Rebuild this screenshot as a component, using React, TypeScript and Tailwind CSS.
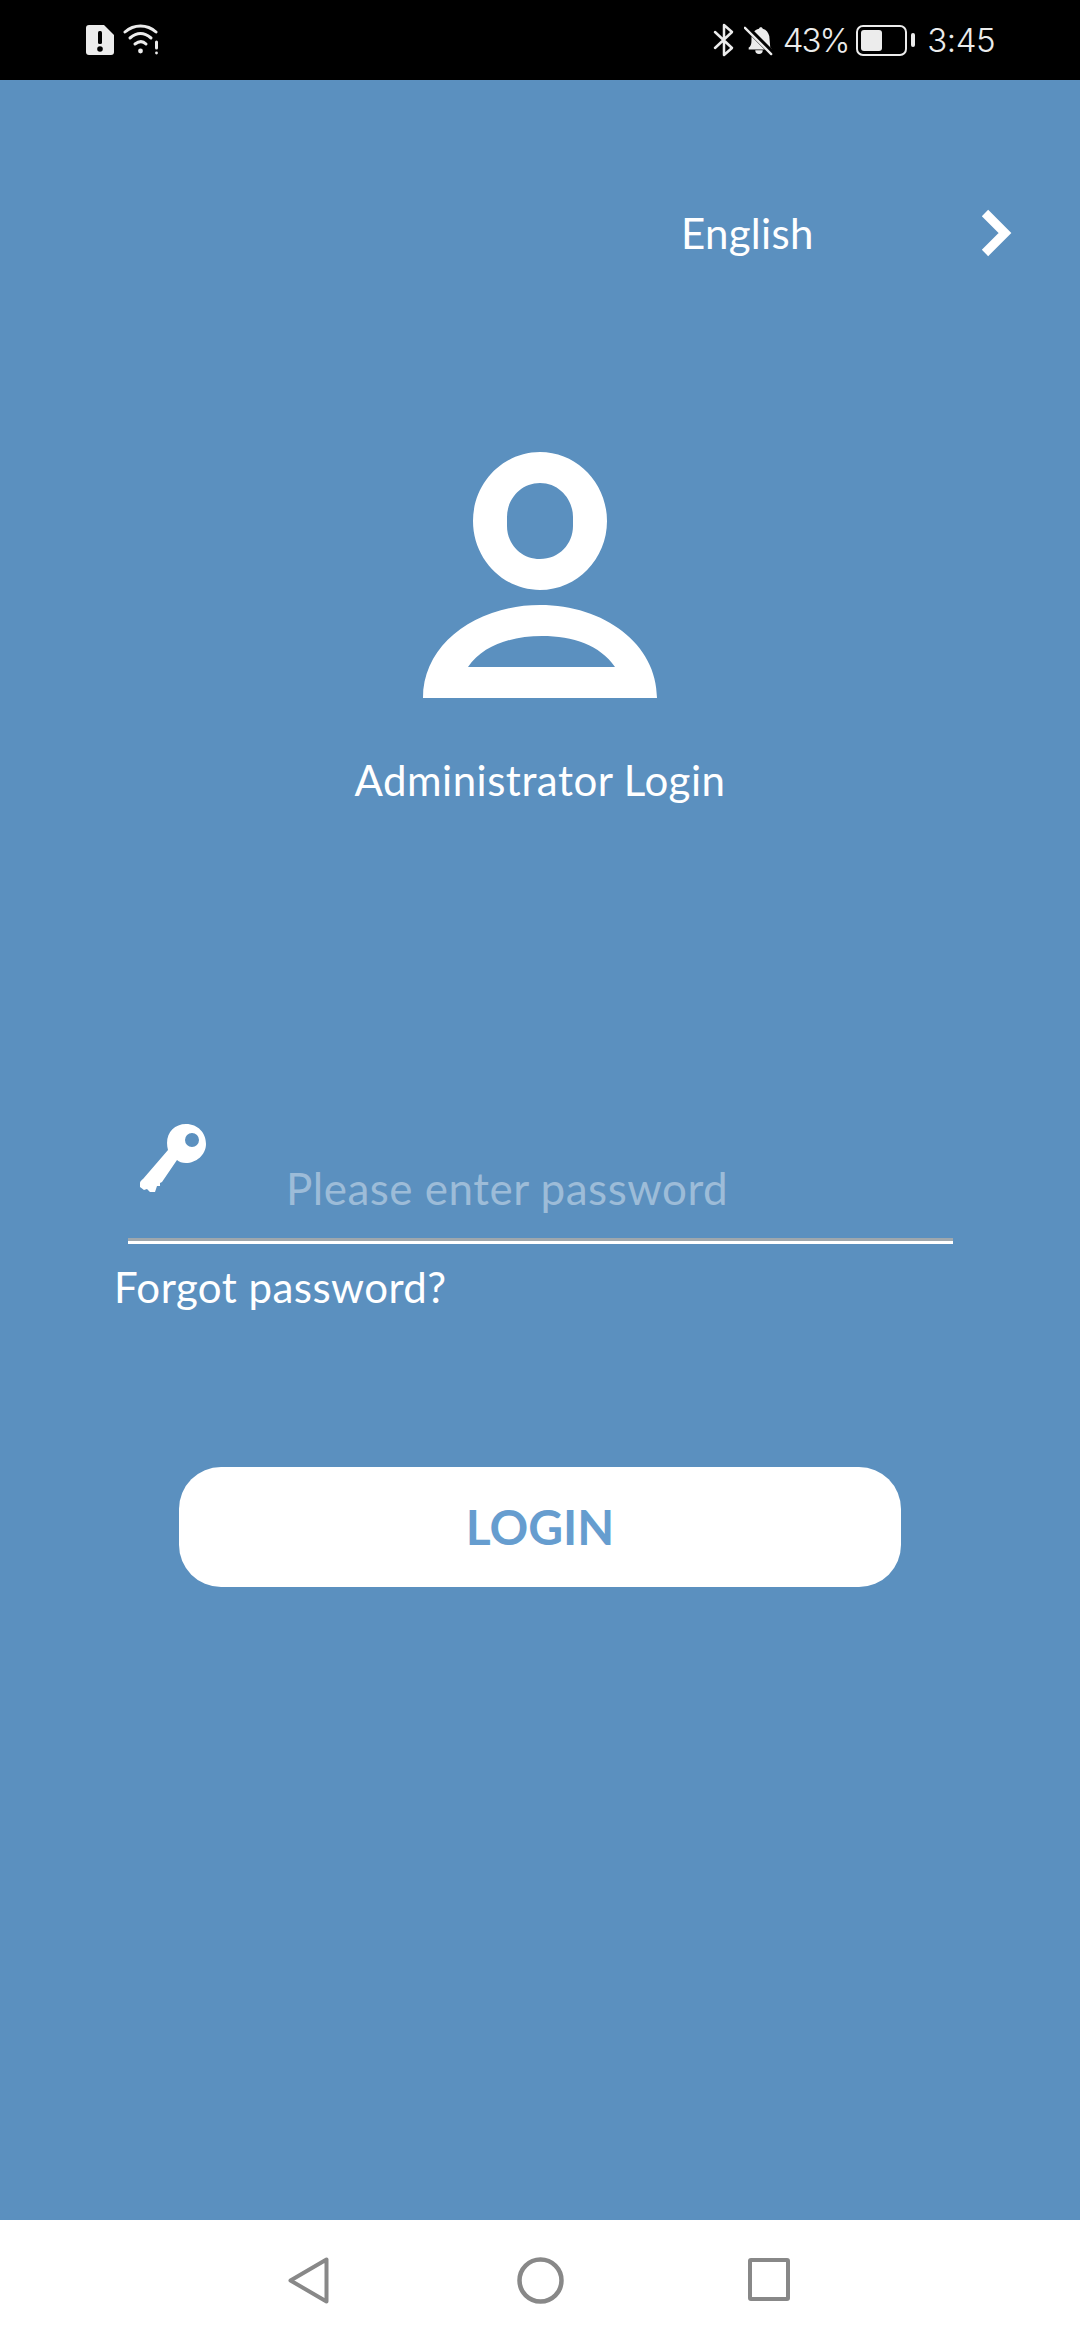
function StatusBar() {
  return (
    <div className="h-[80px] bg-black flex items-center text-[#ececec] pl-[85px] pr-[85px] shrink-0">
      <svg width="30" height="32" viewBox="0 0 30 32" className="mb-[1px]">
        <path d="M4 1h15l10 10v17a3 3 0 0 1-3 3H4a3 3 0 0 1-3-3V4a3 3 0 0 1 3-3z" fill="#ececec" />
        <rect x="13" y="7" width="4" height="13" rx="1.5" fill="#000" />
        <circle cx="15" cy="25" r="2.8" fill="#000" />
      </svg>
      <svg width="38" height="32" viewBox="0 0 38 32" className="ml-[8px]" fill="none" stroke="#ececec" strokeWidth="3" strokeLinecap="round">
        <path d="M2 8C11 0 24 0 33 8" />
        <path d="M7 14C14 8 21 8 28 14" />
        <path d="M12 20C16 17 20 17 23 20" />
        <circle cx="17.5" cy="27" r="2.4" fill="#ececec" stroke="none" />
        <path d="M33.500 18v6" />
        <circle cx="33.500" cy="29" r="1.400" fill="#ececec" stroke="none" />
      </svg>
      <div className="ml-auto flex items-center">
        <svg width="22" height="34" viewBox="0 0 22 34" fill="none" stroke="#ececec" strokeWidth="2.500" strokeLinejoin="round" strokeLinecap="round">
          <path d="M2 9l17 16-8 7V2l8 7L2 25" />
        </svg>
        <svg width="30" height="32" viewBox="0 0 32 32" className="ml-[9px]">
          <path d="M5 24c3-2 3-5 3-10 0-5 3-9 8-10 1-2 3-2 4 0 4 1 6 4 7 8l1 12 2 2H5z" fill="#ececec" />
          <path d="M12 27a4 4 0 0 0 8 0z" fill="#ececec" />
          <path d="M1 1l30 30" stroke="#000" strokeWidth="6" />
          <path d="M1 3l28 28" stroke="#ececec" strokeWidth="2.500" strokeLinecap="round" />
        </svg>
        <span className="ml-[9px] text-[33px] tracking-[-2px] leading-none font-['Inter',sans-serif] font-light">43%</span>
        <div className="ml-[8px] flex items-center">
          <div className="w-[51px] h-[31px] border-2 border-[#ececec] rounded-[7px] p-[3px]">
            <div className="w-[21px] h-full bg-[#ececec] rounded-[3px]" />
          </div>
          <div className="ml-[4px] w-[4px] h-[14px] bg-[#ececec] rounded-full" />
        </div>
        <span className="ml-[12px] text-[33px] tracking-[-0.5px] leading-none font-['Inter',sans-serif] font-light">3:45</span>
      </div>
    </div>
  );
}

function Avatar() {
  return (
    <svg width="234" height="246" viewBox="0 0 234 246">
      <path
        fill="#fff"
        fillRule="evenodd"
        d="M117 0c37 0 67 31 67 69s-30 69-67 69-67-31-67-69S80 0 117 0zm0 31c-19 0-33 16-33 34v9c0 18 14 33 33 33s33-15 33-33v-9c0-18-14-34-33-34z"
      />
      <path
        fill="#fff"
        fillRule="evenodd"
        d="M0 246c0-54 53-93 117-93s117 39 117 93zM45 215h147c-15-22-42-31-73-31-30 0-59 9-74 31z"
      />
    </svg>
  );
}

function KeyIcon() {
  return (
    <svg width="66" height="70" viewBox="0 0 66 70">
      <path
        fill="#fff"
        fillRule="evenodd"
        d="M46 1c12 0 20 9 20 20S56 40 46 40c-4 0-7-1-9-3L22 59l-2 1 0 3-3 0-2 6-5 0-3-3-3 1-4-3c-1-3 0-6 3-8l25-29C24 12 33 1 46 1zm6 9a7 7 0 1 0 0 14 7 7 0 0 0 0-14z"
      />
    </svg>
  );
}

function NavBar() {
  return (
    <div className="h-[120px] bg-white flex items-start shrink-0 pl-[288px] pt-[37px]">
      <svg width="41" height="47" viewBox="0 0 41 47" fill="none" stroke="#888" strokeWidth="4" strokeLinejoin="round">
        <path d="M38.500 2.500v42L2.500 23.500z" />
      </svg>
      <svg width="47" height="47" viewBox="0 0 47 47" fill="none" stroke="#888" strokeWidth="4.500" className="ml-[188px]">
        <circle cx="23.500" cy="23.500" r="21" />
      </svg>
      <div className="ml-[184px] mt-[1px] w-[42px] h-[43px] border-[4.500px] border-[#888] rounded-[3px]" />
    </div>
  );
}

export default function App() {
  return (
    <div className="w-[1080px] h-[2340px] flex flex-col bg-[#5b90bf] text-white font-['Lato',sans-serif]">
      <StatusBar />
      <div className="flex-1 flex flex-col">
        <div className="flex items-center h-[60px] mt-[123px] pl-[681px] pr-[68px] justify-between">
          <span className="text-[42px] tracking-[0.3px] leading-none">English</span>
          <svg width="32" height="48" viewBox="0 0 32 48" fill="none" stroke="#fff" strokeWidth="9" strokeLinejoin="miter">
            <path d="M5 4l20 20L5 44" />
          </svg>
        </div>
        <div className="flex justify-center mt-[189px]">
          <Avatar />
        </div>
        <p className="text-center text-[42px] tracking-[0.5px] leading-none mt-[61px]">Administrator Login</p>
        <div className="mt-[320px] ml-[128px] w-[825px] h-[123px] flex items-start">
          <div className="ml-[12px] mt-[2px]">
            <KeyIcon />
          </div>
          <span className="ml-[80px] mt-[45px] text-[44px] tracking-[0.5px] leading-none text-[#9dbcd8]">Please enter password</span>
        </div>
        <div className="ml-[128px] w-[825px] h-[6px] -mt-[6px] border-t-[3px] border-[#9ea7ad] bg-white" />
        <p className="ml-[114px] mt-[22px] text-[42px] tracking-[0.45px] leading-none">Forgot password?</p>
        <div className="mt-[159px] ml-[179px] w-[722px] h-[120px] rounded-[42px] bg-white flex items-center justify-center">
          <span className="text-[48px] font-bold leading-none text-[#669dcf]">LOGIN</span>
        </div>
      </div>
      <NavBar />
    </div>
  );
}
